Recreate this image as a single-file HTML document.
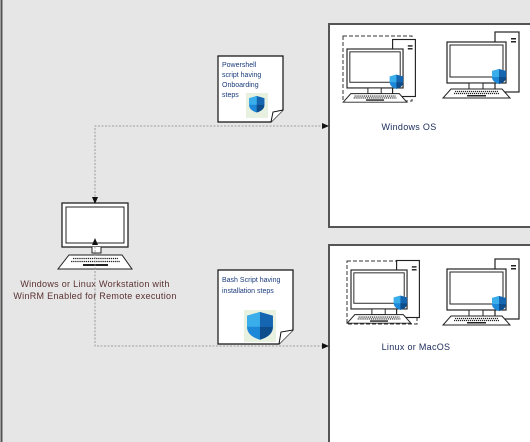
<!DOCTYPE html>
<html><head><meta charset="utf-8"><style>
html,body{margin:0;padding:0;width:530px;height:442px;overflow:hidden;background:#e6e6e6;font-family:"Liberation Sans",sans-serif}
svg{position:absolute;left:0;top:0}
</style></head><body>
<svg width="530" height="442" viewBox="0 0 530 442">
<defs>
<g id="shield">
<path d="M0,2 L7,0 L14,2 L14,8 Q14,13 7,15 Q0,13 0,8 Z" fill="#1e88d8"/>
<path d="M7,0 L14,2 L14,8 L7,8 Z" fill="#1565b0"/>
<path d="M0,2 L7,0 L7,8 L0,8 Z" fill="#3aaeea"/>
<path d="M7,8 L14,8 Q14,13 7,15 Z" fill="#0d4d8c"/>
</g>
<g id="pc">
<rect x="48" y="-10" width="24" height="60" fill="#fff" stroke="#222" stroke-width="1.2"/>
<rect x="64" y="-4" width="5" height="1.5" fill="#222"/><rect x="64" y="-1" width="5" height="1.5" fill="#222"/>
<rect x="0" y="0" width="59" height="41" fill="#fff" stroke="#222" stroke-width="1.2"/>
<rect x="3" y="3" width="53" height="32" fill="#fff" stroke="#222" stroke-width="1"/>
<rect x="22" y="41" width="14" height="6" fill="#fff" stroke="#222" stroke-width="1"/>
<path d="M4,47 L55,47 L63,56 L-4,56 Z" fill="#fff" stroke="#222" stroke-width="1"/>
<path d="M8,49.5 H51 M7,51.5 H52" stroke="#222" stroke-width="1.2" stroke-dasharray="1.2 0.8"/>
<rect x="20" y="53" width="19" height="1.5" fill="#222"/>
<use href="#shield" transform="translate(45,27)"/>
</g>
</defs>
<line x1="1.5" y1="0" x2="1.5" y2="442" stroke="#555" stroke-width="2"/>
<rect x="329" y="24" width="205" height="203" fill="#fff" stroke="#555" stroke-width="2"/>
<rect x="329" y="245" width="205" height="200" fill="#fff" stroke="#555" stroke-width="2"/>
<rect x="343" y="36" width="69" height="65" fill="none" stroke="#333" stroke-dasharray="4 2"/>
<use href="#pc" transform="translate(347,49) scale(0.95)"/>
<use href="#pc" transform="translate(447,42)"/>
<rect x="347" y="261" width="70" height="63" fill="none" stroke="#333" stroke-dasharray="4 2"/>
<use href="#pc" transform="translate(351,270) scale(0.95)"/>
<use href="#pc" transform="translate(447,269)"/>
<text x="409" y="130" font-size="9" text-anchor="middle" fill="#1a2a5a" letter-spacing="0.3">Windows OS</text>
<text x="416" y="350" font-size="9" text-anchor="middle" fill="#1a2a5a" letter-spacing="0.3">Linux or MacOS</text>
<!-- workstation -->
<rect x="62" y="203" width="66" height="44" fill="#fff" stroke="#222" stroke-width="1.3"/>
<rect x="66" y="207" width="58" height="36" fill="#fff" stroke="#222" stroke-width="1"/>
<path d="M92,247 V253 H101 V247" fill="#fff" stroke="#222" stroke-width="1"/>
<path d="M69,255 L122,255 L132,269 L58,269 Z" fill="#fff" stroke="#222" stroke-width="1"/>
<path d="M73,258.5 H118 M71,261.5 H120" stroke="#222" stroke-width="1.3" stroke-dasharray="1.3 0.8"/>
<rect x="83" y="264" width="25" height="2" fill="#222"/>
<text x="95" y="287" font-size="9" text-anchor="middle" fill="#5a3030" letter-spacing="0.3">Windows or Linux Workstation with</text>
<text x="95" y="299" font-size="9" text-anchor="middle" fill="#5a3030" letter-spacing="0.3">WinRM Enabled for Remote execution</text>
<!-- dotted connectors -->
<path d="M95,200 V126 H322" fill="none" stroke="#888" stroke-width="0.8" stroke-dasharray="2 1.5"/>
<path d="M95,243 V346 H322" fill="none" stroke="#888" stroke-width="0.8" stroke-dasharray="2 1.5"/>
<path d="M322,123 L329,126 L322,129 Z" fill="#111"/>
<path d="M322,343 L329,346 L322,349 Z" fill="#111"/>
<path d="M92,197 L95,204 L98,197 Z" fill="#111"/>
<path d="M92,245 L95,238 L98,245 Z" fill="#111"/>
<!-- notes -->
<path d="M218,56 H283 V110 L271,122 H218 Z" fill="#fff" stroke="#111" stroke-width="1.2"/>
<path d="M271,122 L273,112 L283,110" fill="#fff" stroke="#111" stroke-width="1"/>
<text font-size="7" fill="#1a3a7a"><tspan x="222" y="67">Powershell</tspan><tspan x="222" y="77">script having</tspan><tspan x="222" y="87">Onboarding</tspan><tspan x="222" y="97">steps</tspan></text>
<rect x="246" y="93" width="22" height="25" fill="#e8f0e0"/>
<use href="#shield" transform="translate(249,96) scale(1.1)"/>
<path d="M218,270 H293 V330 L279,344 H218 Z" fill="#fff" stroke="#111" stroke-width="1.2"/>
<path d="M279,344 L281,332 L293,330" fill="#fff" stroke="#111" stroke-width="1"/>
<text font-size="7" fill="#1a3a7a"><tspan x="222" y="282">Bash Script having</tspan><tspan x="222" y="293">installation steps</tspan></text>
<rect x="244" y="310" width="32" height="32" fill="#e8f0e0"/>
<use href="#shield" transform="translate(247,312) scale(1.85)"/>
</svg>
</body></html>
